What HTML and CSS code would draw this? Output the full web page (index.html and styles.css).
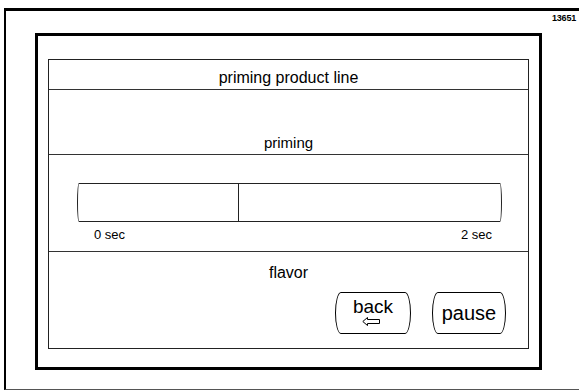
FILE: index.html
```html
<!doctype html>
<html lang="en">
<head>
  <meta charset="UTF-8" />
  <meta name="viewport" content="width=device-width, initial-scale=1" />
  <title>Priming product line</title>
  <link rel="stylesheet" href="styles.css">
</head>
<body>
  <div class="sheet">
    <div class="tag">13651</div>
    <div class="screen">
      <div class="panel">
        <div class="title">priming product line</div>
        <div class="status">priming</div>
        <div class="timer">
          <div class="bar"><div class="bar-done"></div></div>
          <div class="scale"><span>0 sec</span><span>2 sec</span></div>
        </div>
        <div class="footer">
          <div class="flavor">flavor</div>
          <div class="actions">
            <button class="btn btn-back" type="button">
              <span>back</span>
              <svg class="arrow" width="19" height="9" viewBox="0 0 19 9">
                <path d="M0.8 4.5 L5.5 0.5 L5.5 2.5 L17.5 2.5 L17.5 6.5 L5.5 6.5 L5.5 8.5 Z" fill="none" stroke="#000" stroke-width="1" />
              </svg>
            </button>
            <button class="btn btn-pause" type="button">pause</button>
          </div>
        </div>
      </div>
    </div>
  </div>
</body>
</html>
```

FILE: styles.css
```css
html, body {
  margin: 0;
  overflow: hidden;
}
body {
  font-family: "Liberation Sans", Arial, sans-serif;
  color: #000;
  background: #fff;
}
.sheet {
  margin: 8px 0 0 4px;
  width: 575px;
  height: 382px;
  box-sizing: border-box;
  border-top: 3px solid #000;
  border-left: 2px solid #000;
  border-bottom: 1px solid #555;
}
.tag {
  height: 22px;
  box-sizing: border-box;
  padding: 2px 3px 0 0;
  text-align: right;
  font-size: 9px;
  font-weight: bold;
  line-height: 10px;
  letter-spacing: -0.2px;
}
.screen {
  margin-left: 29px;
  width: 507px;
  height: 337px;
  box-sizing: border-box;
  border: 3px solid #000;
  padding: 23px 10px 18px;
  display: flex;
}
.panel {
  flex: 1;
  border: 1px solid #222;
  display: flex;
  flex-direction: column;
}
.title {
  height: 30px;
  box-sizing: border-box;
  border-bottom: 1px solid #333;
  padding-top: 8px;
  text-align: center;
  font-size: 16px;
  line-height: 20px;
}
.status {
  height: 65px;
  box-sizing: border-box;
  border-bottom: 1px solid #333;
  padding-bottom: 3px;
  display: flex;
  flex-direction: column;
  justify-content: flex-end;
  align-items: center;
  font-size: 15px;
  line-height: 17px;
}
.timer {
  height: 97px;
  box-sizing: border-box;
  border-bottom: 1px solid #333;
  padding: 28px 26px 0 28px;
}
.bar {
  height: 39px;
  box-sizing: border-box;
  border: 1px solid #222;
  border-radius: 2px / 50%;
  display: flex;
}
.bar-done {
  width: 161px;
  box-sizing: border-box;
  border-right: 1px solid #222;
}
.scale {
  margin-top: 5px;
  padding: 0 10px 0 17px;
  display: flex;
  justify-content: space-between;
  font-size: 13px;
  line-height: 15px;
}
.footer {
  flex: 1;
  padding-top: 11px;
}
.flavor {
  text-align: center;
  font-size: 16px;
  line-height: 20px;
}
.actions {
  margin-top: 9px;
  padding-right: 22px;
  display: flex;
  justify-content: flex-end;
  gap: 21px;
}
.btn {
  height: 42px;
  box-sizing: border-box;
  margin: 0;
  padding: 0;
  border: 1px solid #000;
  border-radius: 6px / 50%;
  background: #fff;
  color: #000;
  font-family: "Liberation Sans", Arial, sans-serif;
  display: flex;
  flex-direction: column;
  align-items: center;
}
.btn-back {
  width: 76px;
  padding-top: 4px;
  font-size: 19px;
  line-height: 19px;
}
.btn-back .arrow {
  display: block;
  margin-top: 1px;
  margin-right: 3px;
}
.btn-pause {
  width: 74px;
  justify-content: center;
  font-size: 20px;
  line-height: 20px;
}
```
